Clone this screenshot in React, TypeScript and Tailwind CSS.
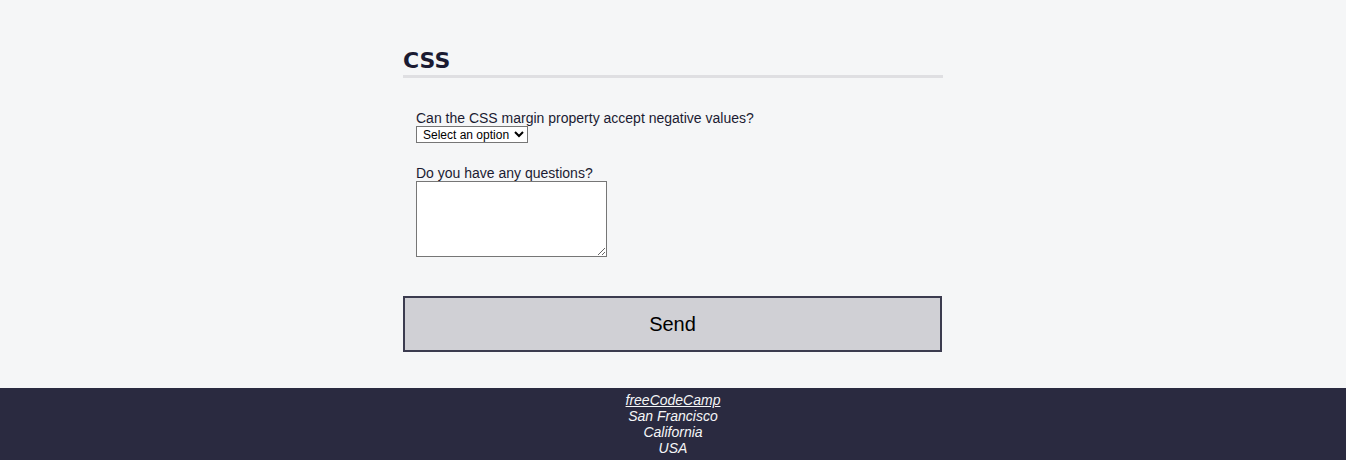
export default function App() {
  return (
    <div className="min-h-[460px] bg-[#f5f6f7] flex flex-col" style={{ fontFamily: '"Liberation Sans", Arial, sans-serif' }}>
      <main className="w-[540px] mx-auto pt-[48px] flex-1">
        <h2 className="text-[22px] leading-[26px] font-bold text-[#1b1b32] border-b-[3px] border-[#dfdfe2] pb-[1px]" style={{ fontFamily: '"DejaVu Sans", Verdana, sans-serif' }}>
          CSS
        </h2>
        <div className="pl-[13px] pt-[32px] text-[14px] leading-[16px] text-[#1b1b32]">
          <label className="block">Can the CSS margin property accept negative values?</label>
          <select className="block h-[17px] text-[12px] leading-[14px] bg-white border border-[#767676] pl-[2px] pr-[1px] text-black" defaultValue="">
            <option value="" disabled>Select an option</option>
            <option>Yes</option>
            <option>No</option>
          </select>
          <label className="block mt-[22px]">Do you have any questions?</label>
          <textarea className="block w-[191px] h-[76px] bg-white border border-[#767676]" />
        </div>
        <button className="mt-[39px] w-[539px] h-[56px] bg-[#d0d0d5] border-2 border-[#3b3b4f] text-[20px] text-black">
          Send
        </button>
      </main>
      <footer className="mt-[36px] bg-[#2a2a40] text-[#f5f6f7] text-[14px] leading-[16px] italic text-center pt-[4px] pb-[4px]">
        <p><a className="underline" href="#">freeCodeCamp</a></p>
        <p>San Francisco</p>
        <p>California</p>
        <p>USA</p>
      </footer>
    </div>
  );
}
